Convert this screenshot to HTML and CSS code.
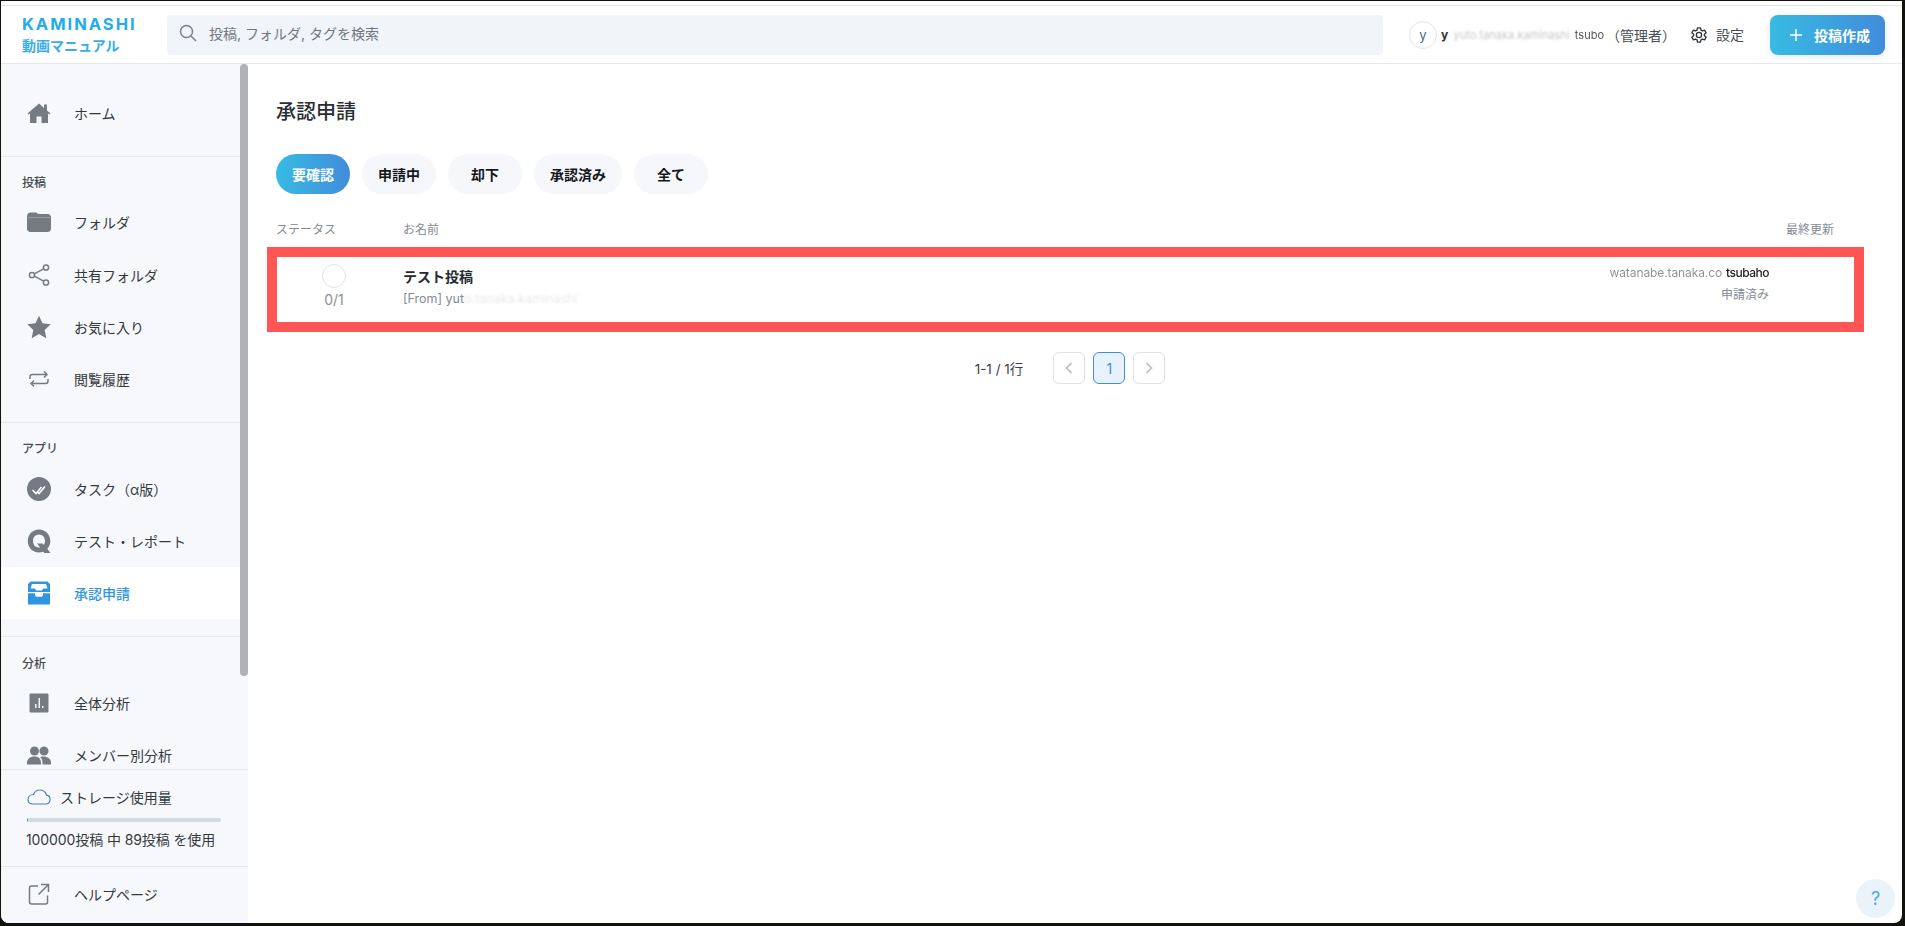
FILE: index.html
```html
<!DOCTYPE html>
<html lang="ja">
<head>
<meta charset="utf-8">
<title>承認申請</title>
<link rel="stylesheet" href="styles.css">
</head>
<body>
<div class="frame">
  <header class="header">
    <div class="logo">
      <div class="logo-main">KAMINASHI</div>
      <div class="logo-sub">動画マニュアル</div>
    </div>
    <div class="search">
      <svg class="search-icon" viewBox="0 0 18 18"><circle cx="7.5" cy="7.5" r="6" /><path d="M12 12l5 5"/></svg>
      <span>投稿, フォルダ, タグを検索</span>
    </div>
    <div class="user">
      <span class="avatar">y</span>
      <span class="user-name"><span class="redacted-y">y</span><span class="redacted">yuto.tanaka.kaminashi</span><span class="redacted-end">tsubo</span></span>
      <span class="role">（管理者）</span>
    </div>
    <div class="settings">
      <svg viewBox="0 0 24 24" class="gear"><path d="M10 2.500h4l.6 3 2 1.100 2.900-1 2 3.500-2.300 2v1.800l2.300 2-2 3.500-2.900-1-2 1.100-.6 3h-4l-.6-3-2-1.100-2.900 1-2-3.500 2.300-2v-1.800l-2.300-2 2-3.500 2.900 1 2-1.100z"/><circle cx="12" cy="12" r="3.500"/></svg>
      <span class="settings-label">設定</span>
    </div>
    <button class="create"><svg class="plus" viewBox="0 0 12 12"><path d="M6 0v12M0 6h12"/></svg>投稿作成</button>
  </header>
  <div class="body">
    <aside class="sidebar">
      <div class="side-scroll">
        <nav class="nav">
          <section class="nav-sec first">
            <a class="item"><svg class="ico" viewBox="0 0 24 24"><path class="f" d="M12 2.500L.5 12.500l.8 1L3 12.400V22h6.500v-6.500h5V22H21v-9.600l1.700 1.100.8-1-3.500-3V3.500h-3v3.400z"/></svg>ホーム</a>
          </section>
          <section class="nav-sec">
            <h3 class="sec-title">投稿</h3>
            <a class="item"><svg class="ico" viewBox="0 0 24 24"><path class="f" d="M3.500 2.500h5c1.200 0 1.800.6 2.500 1.500h9.500C22.500 4 24 5.300 24 7.500v11c0 2.200-1.500 3.500-3.500 3.500h-17C1.500 22 0 20.700 0 18.500v-12C0 4 1.500 2.500 3.500 2.500z"/><path class="w-thin" d="M1 7.500h22"/></svg>フォルダ</a>
            <a class="item"><svg class="ico" viewBox="0 0 24 24"><g class="s"><circle cx="5" cy="12" r="2.600"/><circle cx="19" cy="4.500" r="2.600"/><circle cx="19" cy="19.500" r="2.600"/><path d="M7.300 10.800l9.400-5M7.300 13.200l9.400 5"/></g></svg>共有フォルダ</a>
            <a class="item"><svg class="ico" viewBox="0 0 24 24"><path class="f" d="M12 .8l3.500 7.500 8.200 1-6 5.700 1.600 8.200-7.300-4.100-7.300 4.100L6.300 15l-6-5.700 8.200-1z"/></svg>お気に入り</a>
            <a class="item"><svg class="ico" viewBox="0 0 24 24"><g class="s"><path d="M3 12V10c0-1.500 1-2.500 2.500-2.500H20M17 4.500l3 3-3 3"/><path d="M21 12v2c0 1.500-1 2.500-2.500 2.500H4M7 13.500l-3 3 3 3"/></g></svg>閲覧履歴</a>
          </section>
          <section class="nav-sec">
            <h3 class="sec-title">アプリ</h3>
            <a class="item"><svg class="ico" viewBox="0 0 24 24"><circle class="f" cx="12" cy="12" r="12"/><path class="w" d="M5.500 13l3.500 3.500 5.500-6.500M11 15.500l1 1 6-7"/></svg>タスク（α版）</a>
            <a class="item"><svg class="ico" viewBox="0 0 24 24"><path class="q" d="M12 .5C5.500.5.800 5.500.8 12S5.500 23.500 12 23.500c1.500 0 3-.3 4.300-.8l1 1.300h6.200l-3.200-4.300c2-2 3-4.800 3-7.700C23.300 5.500 18.500.5 12 .5zm0 5c3.500 0 6 2.800 6 6.500 0 1.500-.4 2.800-1.100 3.900l-1.200-1.500h-5.500l3 4c-.4.100-.8.100-1.200.1-3.500 0-6-2.800-6-6.500s2.500-6.500 6-6.500z"/></svg>テスト・レポート</a>
            <a class="item active"><svg class="ico" viewBox="0 0 24 24"><path class="b" d="M3.500.5h17L23 3v8H1V3zM5 3l-1.500 4.500H8l1 2h6l1-2h4.500L19 3zM1 12.300h7v1.700l1 1.800h6l1-1.800v-1.700h7v11.200H1z"/></svg>承認申請</a>
          </section>
          <section class="nav-sec last">
            <h3 class="sec-title">分析</h3>
            <a class="item"><svg class="ico" viewBox="0 0 24 24"><path class="f" fill-rule="evenodd" d="M4 2.500h16c1 0 1.500.5 1.500 1.500v16c0 1-.5 1.500-1.500 1.500H4c-1 0-1.500-.5-1.500-1.500V4c0-1 .5-1.500 1.500-1.500zM8 13v4h1.500v-4zm3.500-6v10H13V7zm3.500 8v2h1.500v-2z"/></svg>全体分析</a>
            <a class="item"><svg class="ico" viewBox="0 0 24 24"><g class="f"><circle cx="7.500" cy="8" r="4.500"/><circle cx="17" cy="8" r="4.500"/><path d="M0 20c0-4 3-6.500 7.500-6.500S14 16 14 20v1.500H0zM15.500 13.500c4.500-.5 8.500 2 8.500 6v2h-8.500v-2c0-2.500-1-4.500-2.500-5.500z"/></g></svg>メンバー別分析</a>
          </section>
        </nav>
        <div class="scrollbar"><div class="thumb"></div></div>
      </div>
      <div class="storage">
        <div class="storage-head"><svg class="cloud" viewBox="0 0 24 16"><path d="M6 15h12.500a4.500 4.500 0 0 0 1-8.900A7 7 0 0 0 12.500 1C9.500 1 7.500 3 6.500 5.500 3.500 5.500 1 7.500 1 10.500S3 15 6 15z"/></svg>ストレージ使用量</div>
        <div class="progress"><div class="progress-fill"></div></div>
        <div class="storage-text">100000投稿 中 89投稿 を使用</div>
      </div>
      <a class="item help"><svg class="ico" viewBox="0 0 24 24"><g class="s"><path d="M11 4H4.500C3 4 2.500 4.500 2.500 6v14c0 1.500.5 2 2 2h14c1.500 0 2-.5 2-2v-6.500"/><path d="M14 2.500h7.500V10M21.500 2.500l-10 10"/></g></svg>ヘルプページ</a>
    </aside>
    <main class="main">
      <h1 class="title">承認申請</h1>
      <div class="tabs">
        <button class="tab on">要確認</button>
        <button class="tab">申請中</button>
        <button class="tab">却下</button>
        <button class="tab">承認済み</button>
        <button class="tab">全て</button>
      </div>
      <div class="thead">
        <span class="col-status">ステータス</span>
        <span class="col-name">お名前</span>
        <span class="col-date">最終更新</span>
      </div>
      <div class="row">
        <div class="status">
          <span class="ring"></span>
          <span class="count">0/1</span>
        </div>
        <div class="name">
          <div class="name-title">テスト投稿</div>
          <div class="name-from">[From] yut<span class="redacted-light">o.tanaka.kaminashi</span></div>
        </div>
        <div class="meta">
          <div class="meta-user"><span class="redacted-strong">watanabe.tanaka.co</span><span class="redacted-dark">tsubaho</span></div>
          <div class="meta-state">申請済み</div>
        </div>
      </div>
      <div class="pager">
        <span class="pager-count">1-1 / 1行</span>
        <div class="pager-btns">
          <button class="pg"><svg viewBox="0 0 10 14"><path d="M7.500 2L2.500 7l5 5"/></svg></button>
          <button class="pg cur">1</button>
          <button class="pg"><svg viewBox="0 0 10 14"><path d="M2.500 2l5 5-5 5"/></svg></button>
        </div>
      </div>
      <button class="qa">?</button>
    </main>
  </div>
</div>
</body>
</html>
```
FILE: styles.css
```css
* { box-sizing: border-box; }
html, body { margin: 0; height: 100%; }
body {
  background: #12120c;
  padding: 1px 3px 3px 1px;
  overflow: hidden;
  font-family: Inter, "Noto Sans CJK JP", sans-serif;
  color: #2b2f33;
}
.frame {
  height: 100%;
  background: #fff;
  padding-top: 4px;
  border-radius: 0 0 8px 8px;
  overflow: hidden;
  display: flex;
  flex-direction: column;
}
.header {
  height: 59px;
  flex: none;
  border-top: 1px solid #e3e5e8;
  border-bottom: 1px solid #e6e8ec;
  display: flex;
  align-items: center;
  padding: 0 17px 0 21px;
}
.logo { width: 145px; flex: none; padding-top: 1px; }
.logo-main { font: 700 16.500px/16px Inter, sans-serif; letter-spacing: 2px; color: #22ade9; white-space: nowrap; }
.logo-sub { font: 700 14px/20px "Noto Sans CJK JP", sans-serif; color: #3aaeea; margin-top: 3px; white-space: nowrap; }
.search {
  flex: none;
  width: 1216px;
  height: 40px;
  background: #f1f4f8;
  border-radius: 4px;
  display: flex;
  align-items: center;
  gap: 12px;
  padding: 0 0 3px 12px;
  font-size: 14px;
  color: #6f7780;
}
.search-icon { width: 18px; height: 18px; fill: none; stroke: #7b8188; stroke-width: 1.500; }
.user { flex: none; margin-left: 26px; display: flex; align-items: center; font-size: 14px; width: 281px; }
.avatar {
  width: 28px; height: 28px; border-radius: 50%;
  border: 1px solid #dfe5ef;
  display: flex; align-items: center; justify-content: center;
  font-size: 13px; color: #4a6a8a; flex: none;
}
.user-name { width: 163px; margin-left: 4px; flex: none; white-space: nowrap; color: #3d4248; display: flex; align-items: center; font-size: 11px; justify-content: space-between; }
.redacted-y { color: #333; font-weight: 700; font-size: 12px; }
.redacted { color: #999; filter: blur(.8px); opacity: .55; }
.redacted-end { color: #555; filter: blur(.6px); }
.role { white-space: nowrap; color: #4a4f55; flex: none; margin-left: 2px; }
.settings { display: flex; align-items: center; gap: 8px; font-size: 14px; color: #4a4f55; flex: none; }
.settings-label { margin-bottom: 2px; }
.gear { width: 18px; height: 18px; fill: none; stroke: #33373b; stroke-width: 1.800; stroke-linejoin: round; }
.create {
  margin-left: auto;
  width: 115px; height: 40px; flex: none;
  border: 0; border-radius: 8px;
  background: linear-gradient(90deg, #38bbe3, #418cdb);
  color: #fff; font: 700 14px Inter, "Noto Sans CJK JP", sans-serif;
  box-shadow: 0 2px 8px rgba(65,140,219,.15);
  display: flex; align-items: center; justify-content: flex-start; gap: 12px; padding: 0 0 0 20px;
}
.plus { width: 12px; height: 12px; fill: none; stroke: #fff; stroke-width: 1.500; flex: none; }
.body { flex: 1; min-height: 0; display: flex; }
.sidebar { width: 247px; flex: none; background: #f7f8fc; display: flex; flex-direction: column; }
.side-scroll { height: 705px; flex: none; display: flex; overflow: hidden; }
.nav { width: 239px; flex: none; }
.scrollbar { width: 8px; flex: none; }
.thumb { height: 612px; background: #b0b1b5; border-radius: 4px; }
.nav-sec { padding: 18px 0 17px; border-bottom: 1px solid #e4e7ee; }
.nav-sec.first { padding-top: 23px; }
.nav-sec.last { border-bottom: 0; padding-top: 19px; }
.sec-title { margin: 0 0 5px 21px; font-size: 12px; line-height: 16px; font-weight: 500; color: #444a50; }
.last .sec-title { margin-bottom: 4px; }
.item {
  height: 52.300px;
  display: flex; align-items: center;
  padding-left: 26px;
  font-size: 14px; color: #33383d;
}
.item.active { background: #fff; color: #3394e3; font-weight: 500; }
.ico { width: 24px; height: 24px; flex: none; margin-right: 23px; }
.f { fill: #757b82; }
.q { fill: #757b82; fill-rule: evenodd; }
.b { fill: #2f95e3; fill-rule: evenodd; }
.s { fill: none; stroke: #757b82; stroke-width: 1.500; }
.w { fill: none; stroke: #fff; stroke-width: 1.600; }
.w-thin { fill: none; stroke: #a9adb2; stroke-width: .7; }
.storage { height: 98px; flex: none; border-top: 1px solid #e4e7ee; border-bottom: 1px solid #e4e7ee; padding: 15px 26px 0; }
.storage-head { display: flex; align-items: center; gap: 9px; font-size: 14px; color: #33383d; height: 24px; }
.cloud { width: 24px; height: 16px; fill: none; stroke: #4a80bb; stroke-width: 1.200; flex: none; }
.progress { width: 194px; height: 4px; margin-top: 9px; background: #d2dae4; border-radius: 2px; overflow: hidden; }
.progress-fill { width: 1px; height: 4px; background: #3f8fdd; }
.storage-text { font-size: 14px; line-height: 20px; margin: 8px 0 0 -1px; color: #33383d; white-space: nowrap; letter-spacing: -.1px; }
.help { height: 54px; }
.main { flex: 1; min-width: 0; padding: 0 47px 0 28px; position: relative; }
.title { margin: 0; padding-top: 33px; font-size: 20px; line-height: 30px; font-weight: 500; color: #2a2e32; }
.tabs { display: flex; gap: 12px; margin-top: 27px; }
.tab {
  min-width: 74px; height: 40px; padding: 0 16px;
  border: 0; border-radius: 20px;
  background: #f6f7fb; color: #15181b;
  font: 700 14px Inter, "Noto Sans CJK JP", sans-serif;
}
.tab.on { background: linear-gradient(90deg, #38bbe3, #418cdb); color: #fff; }
.thead { display: flex; margin-top: 27px; font-size: 12px; line-height: 18px; color: #858b92; height: 26px; }
.col-status { width: 127px; }
.col-date { margin-left: auto; margin-right: 21px; }
.row {
  display: flex;
  margin: 0 -9px;
  height: 85px;
  border: 10px solid #ff5555;
  background: #fff;
}
.status { width: 114px; flex: none; display: flex; flex-direction: column; align-items: center; padding-top: 7px; }
.ring { width: 24px; height: 24px; border-radius: 50%; border: 1px solid #dfe5ef; }
.count { font-size: 14px; line-height: 18px; margin-top: 3px; color: #8a9096; }
.name { flex: 1; padding: 10px 0 0 12px; }
.name-title { font-size: 14px; line-height: 20px; font-weight: 600; color: #25292d; }
.name-from { font-size: 12.500px; line-height: 18px; margin-top: 3px; color: #858b92; }
.redacted-light { filter: blur(.9px); opacity: .2; display: inline-block; }
.meta { text-align: right; padding-right: 85px; padding-top: 7px; }
.meta-user { font-size: 12px; line-height: 18px; white-space: nowrap; color: #33383d; display: flex; justify-content: flex-end; gap: 4px; }
.redacted-strong { filter: blur(.7px); opacity: .55; letter-spacing: -.1px; }
.redacted-dark { filter: blur(.5px); color: #222; font-weight: 500; letter-spacing: -.5px; }
.meta-state { font-size: 12px; line-height: 18px; margin-top: 4px; color: #858b92; }
.pager { display: flex; align-items: center; justify-content: center; margin-top: 20px; padding-left: 9px; gap: 30px; }
.pager-count { font-size: 13.500px; color: #3d4248; }
.pager-btns { display: flex; gap: 8px; }
.pg {
  width: 32px; height: 32px; padding: 0;
  border: 1px solid #e0e1e4; border-radius: 6px; background: #fff;
  display: flex; align-items: center; justify-content: center;
  font: 14px Inter, sans-serif;
}
.pg svg { width: 10px; height: 14px; fill: none; stroke: #c4c6ca; stroke-width: 1.800; }
.pg.cur { border-color: #3d8fdc; background: #e8f2fc; color: #3d8fdc; }
.qa {
  position: absolute; right: 7px; bottom: 5px;
  width: 39px; height: 39px; border-radius: 50%;
  border: 0; background: #eaf3fa; color: #4ba8f0;
  font: 18px Inter, sans-serif; padding: 0;
}
```
